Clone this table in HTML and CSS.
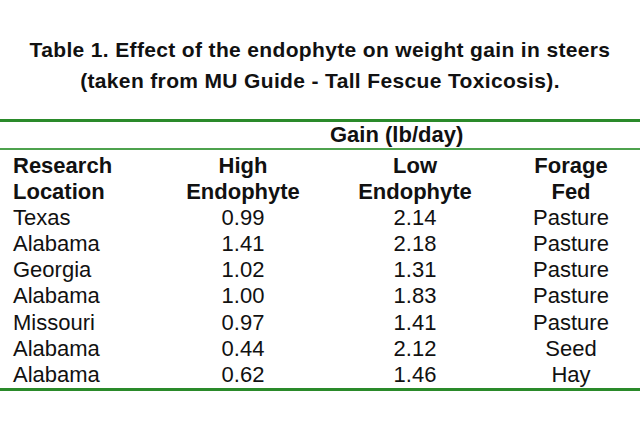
FILE: index.html
```html
<!DOCTYPE html>
<html>
<head>
<meta charset="utf-8">
<link rel="stylesheet" href="styles.css">
</head>
<body>
<div class="page">
  <div class="title">
    <div class="title-line">Table 1. Effect of the endophyte on weight gain in steers</div>
    <div class="title-line">(taken from MU Guide - Tall Fescue Toxicosis).</div>
  </div>
  <div class="rule rule-top"></div>
  <div class="group-row"><span class="group-label">Gain (lb/day)</span></div>
  <div class="rule rule-thin"></div>
  <div class="table">
    <div class="row head"><span class="c1">Research</span><span class="c2">High</span><span class="c3">Low</span><span class="c4">Forage</span></div>
    <div class="row head"><span class="c1">Location</span><span class="c2">Endophyte</span><span class="c3">Endophyte</span><span class="c4">Fed</span></div>
    <div class="row"><span class="c1">Texas</span><span class="c2">0.99</span><span class="c3">2.14</span><span class="c4">Pasture</span></div>
    <div class="row"><span class="c1">Alabama</span><span class="c2">1.41</span><span class="c3">2.18</span><span class="c4">Pasture</span></div>
    <div class="row"><span class="c1">Georgia</span><span class="c2">1.02</span><span class="c3">1.31</span><span class="c4">Pasture</span></div>
    <div class="row"><span class="c1">Alabama</span><span class="c2">1.00</span><span class="c3">1.83</span><span class="c4">Pasture</span></div>
    <div class="row"><span class="c1">Missouri</span><span class="c2">0.97</span><span class="c3">1.41</span><span class="c4">Pasture</span></div>
    <div class="row"><span class="c1">Alabama</span><span class="c2">0.44</span><span class="c3">2.12</span><span class="c4">Seed</span></div>
    <div class="row"><span class="c1">Alabama</span><span class="c2">0.62</span><span class="c3">1.46</span><span class="c4">Hay</span></div>
  </div>
  <div class="rule rule-bottom"></div>
</div>
</body>
</html>
```
FILE: styles.css
```css
html, body {
  margin: 0;
  padding: 0;
  background: #ffffff;
}
.page {
  width: 640px;
  height: 428px;
  font-family: "Liberation Sans", Arial, sans-serif;
  color: #111111;
}
.title {
  padding-top: 34px;
  text-align: center;
  font-weight: bold;
  font-size: 21px;
  line-height: 31px;
  letter-spacing: 0.35px;
}
.title-line {
  white-space: nowrap;
}
.rule {
  width: 640px;
}
.rule-top {
  margin-top: 23px;
  height: 3px;
  background: #2a8a2a;
}
.rule-thin {
  height: 2px;
  background: #4ea24e;
}
.rule-bottom {
  height: 3px;
  background: #2a8a2a;
}
.group-row {
  height: 26px;
  font-size: 22px;
  line-height: 26px;
  font-weight: bold;
  padding-left: 330px;
}
.table {
  padding-top: 2.5px;
  font-size: 22px;
}
.row {
  display: grid;
  grid-template-columns: 150px 160px 184px 128px;
  padding-left: 13px;
  height: 26.2px;
  line-height: 26.2px;
}
.row.head {
  font-weight: bold;
}
.c1 { text-align: left; }
.c2, .c3, .c4 { text-align: center; }
```
